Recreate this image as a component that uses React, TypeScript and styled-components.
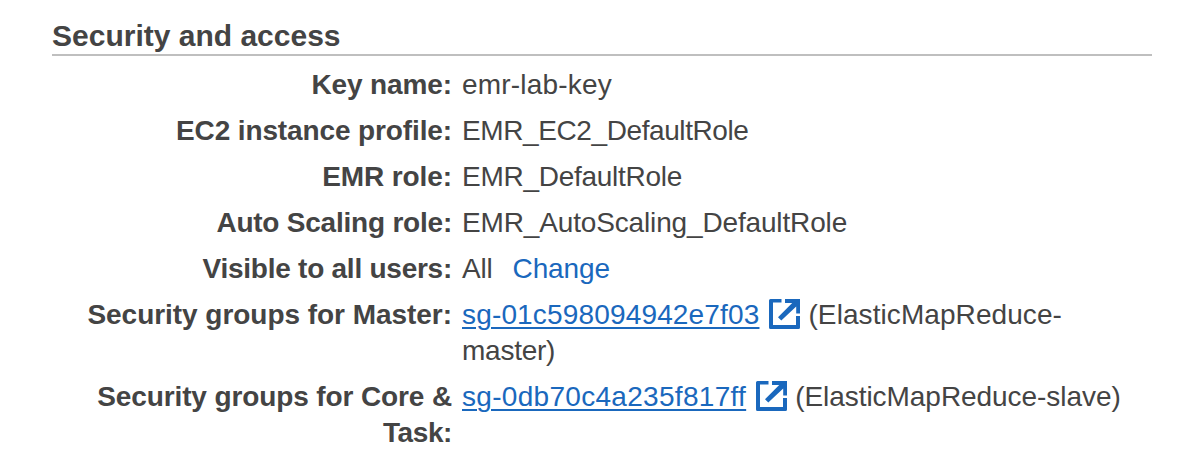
import React from "react";
import styled, { createGlobalStyle } from "styled-components";

const GlobalStyle = createGlobalStyle`
  * { box-sizing: border-box; }
  body { margin: 0; background: #fff; color: #444; font-family: "Liberation Sans", Arial, sans-serif; }
`;

const Panel = styled.section`
  width: 1194px;
  height: 474px;
  padding: 18px 42px 0 52px;
  overflow: hidden;
`;

const Heading = styled.h2`
  margin: 0;
  height: 38px;
  border-bottom: 2px solid #bfbfbf;
  font-size: 30px;
  line-height: 36px;
  white-space: nowrap;
`;

const Details = styled.dl`
  margin: 11px 0 0;
  display: grid;
  grid-template-columns: 400px 1fr;
  column-gap: 10px;
  row-gap: 10px;
  font-size: 28px;
  line-height: 36px;
`;

const Term = styled.dt`
  font-weight: 700;
  text-align: right;
  white-space: nowrap;
`;

const Value = styled.dd`
  margin: 0;
  white-space: nowrap;
`;

const Text = styled.span<{ $tracking?: number }>`
  letter-spacing: ${(p) => p.$tracking ?? 0}px;
`;

const ChangeLink = styled.a`
  margin-left: 20px;
  color: #1a68bd;
  letter-spacing: -0.1px;
`;

const GroupLink = styled.a<{ $tracking?: number }>`
  color: #1a68bd;
  letter-spacing: ${(p) => p.$tracking ?? 0}px;
  text-decoration: underline;
  text-decoration-thickness: 2px;
  text-underline-offset: 3px;
`;

const Icon = styled.svg`
  width: 31px;
  height: 30px;
  margin: 0 8px 0 10px;
  vertical-align: -5px;
  fill: #1a68bd;
`;

const External = () => (
  <Icon viewBox="0 0 31 30" aria-hidden="true">
    <path d="M1.5 0H12.5V3.5H4V26H27V17H31V28.5Q31 30 29.5 30H1.5Q0 30 0 28.5V1.5Q0 0 1.5 0Z" />
    <path d="M16 0H31V14.5H27.2V7.5L12.3 21.5L9 18.2L23.2 4H16Z" />
  </Icon>
);

export default function App() {
  return (
    <>
      <GlobalStyle />
      <Panel>
        <Heading>Security and access</Heading>
        <Details>
          <Term><Text $tracking={-0.12}>Key name:</Text></Term>
          <Value><Text $tracking={0.2}>emr-lab-key</Text></Value>
          <Term><Text $tracking={-0.12}>EC2 instance profile:</Text></Term>
          <Value><Text $tracking={-0.4}>EMR_EC2_DefaultRole</Text></Value>
          <Term><Text $tracking={-0.1}>EMR role:</Text></Term>
          <Value><Text $tracking={-0.27}>EMR_DefaultRole</Text></Value>
          <Term><Text $tracking={-0.22}>Auto Scaling role:</Text></Term>
          <Value><Text $tracking={-0.15}>EMR_AutoScaling_DefaultRole</Text></Value>
          <Term><Text $tracking={-0.25}>Visible to all users:</Text></Term>
          <Value><Text $tracking={-0.2}>All</Text><ChangeLink>Change</ChangeLink></Value>
          <Term><Text $tracking={-0.04}>Security groups for Master:</Text></Term>
          <Value>
            <GroupLink $tracking={0.16}>sg-01c598094942e7f03</GroupLink><External /><Text $tracking={0.08}>(ElasticMapReduce-</Text>
            <br />
            <Text $tracking={-0.25}>master)</Text>
          </Value>
          <Term>
            <Text $tracking={-0.12}>Security groups for Core &amp;</Text>
            <br />
            <Text $tracking={-0.4}>Task:</Text>
          </Term>
          <Value>
            <GroupLink $tracking={0.3}>sg-0db70c4a235f817ff</GroupLink><External /><Text $tracking={-0.05}>(ElasticMapReduce-slave)</Text>
          </Value>
        </Details>
      </Panel>
    </>
  );
}
